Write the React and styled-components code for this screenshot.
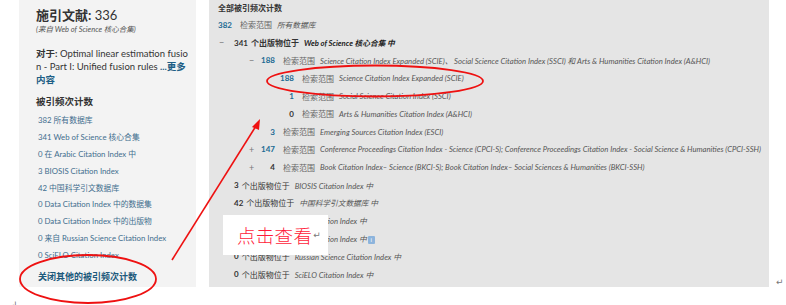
import React from 'react';
import styled, { createGlobalStyle } from 'styled-components';

const GlobalStyle = createGlobalStyle`
  body {
    margin: 0;
    background: #fff;
    font-family: Lato, "Noto Sans CJK SC", sans-serif;
  }
`;

const Page = styled.div`
  position: relative;
  width: 786px;
  height: 305px;
  overflow: hidden;
`;

const Top = styled.div`
  display: flex;
  align-items: flex-end;
  padding-left: 19px;
`;

const Side = styled.div`
  width: 177px;
  height: 287px;
  box-sizing: border-box;
  padding: 7px 0 0 17px;
  background: #f3f3f3;
  margin-right: 13px;
`;

const Title = styled.div`
  font-size: 13px;
  line-height: 17px;
  color: #333;
  b { font-weight: 700; }
`;

const Source = styled.div`
  font-size: 7.5px;
  font-style: italic;
  color: #555;
  line-height: 10px;
  margin-top: 1px;
`;

const About = styled.div`
  margin-top: 12px;
  width: 152px;
  font-size: 9.5px;
  line-height: 13px;
  color: #333;
  word-break: break-all;
  b { font-weight: 700; }
`;

const More = styled.span`
  color: #1d5e85;
  font-weight: 700;
`;

const SideHead = styled.div`
  margin-top: 10px;
  font-size: 9.5px;
  font-weight: 700;
  color: #333;
  line-height: 12px;
`;

const SideList = styled.div`
  margin-top: 4px;
  padding-left: 2px;
  display: flex;
  flex-direction: column;
`;

const SideLink = styled.div`
  height: 16.9px;
  line-height: 16.9px;
  font-size: 7.8px;
  color: #3f6e8e;
  white-space: nowrap;
`;

const CloseLink = styled.div`
  margin-top: 6px;
  padding-left: 2px;
  font-size: 9px;
  font-weight: 700;
  color: #1d5a7c;
`;

const Main = styled.div`
  width: 560px;
  height: 287px;
  box-sizing: border-box;
  padding: 1px 0 0 9px;
  background: #e5e5e5;
`;

const MainHead = styled.div`
  height: 15px;
  line-height: 15px;
  font-size: 8px;
  font-weight: 700;
  color: #333;
`;

const Row = styled.div`
  display: flex;
  align-items: center;
  height: 17.8px;
  padding-left: ${p => p.indent || 0}px;
  font-size: 8px;
  white-space: nowrap;
  color: #333;
`;

const Toggle = styled.span`
  width: ${p => p.w}px;
  flex: none;
  color: #777;
  font-size: 9px;
  padding-left: 1px;
  box-sizing: border-box;
`;

const Num = styled.span`
  width: ${p => (p.w ? p.w + 'px' : 'auto')};
  flex: none;
  text-align: right;
  font-weight: 700;
  color: ${p => (p.link ? '#1c6a93' : '#333')};
`;

const Label = styled.span`
  margin-left: 8px;
  color: #666;
`;

const Scope = styled.span`
  margin-left: 5px;
  font-style: italic;
  color: #555;
  font-size: 7.7px;
`;

const Pub = styled.span`
  margin-left: 3px;
  color: #333;
  font-weight: ${p => (p.bold ? 700 : 400)};
`;

const PubScope = styled.span`
  margin-left: 5px;
  font-style: italic;
  font-size: 7.7px;
  color: ${p => (p.bold ? '#222' : '#555')};
  font-weight: ${p => (p.bold ? 700 : 400)};
`;

const Info = styled.span`
  display: inline-block;
  width: 7px;
  height: 8px;
  margin-left: 1px;
  background: #8db4dc;
  color: #fff;
  font-size: 6px;
  line-height: 8px;
  text-align: center;
  font-style: normal;
  border-radius: 1px;
`;

const Mark = styled.span`
  color: #777;
  font-size: 9px;
  line-height: 9px;
  margin-left: ${p => p.ml || 0}px;
  font-family: "DejaVu Sans", sans-serif;
`;

const Bottom = styled.div`
  padding: 5px 0 0 10px;
  height: 11px;
`;

const Annot = styled.svg`
  position: absolute;
  left: 0;
  top: 0;
  pointer-events: none;
`;

const Callout = styled.div`
  position: absolute;
  left: 223px;
  top: 215px;
  width: 105px;
  height: 40px;
  background: #fff;
  display: flex;
  align-items: center;
  padding-left: 14px;
  box-sizing: border-box;
`;

const CalloutText = styled.span`
  font-family: "Noto Sans CJK SC", serif;
  font-weight: 300;
  font-size: 18.5px;
  color: #ff1a3a;
  letter-spacing: 0.3px;
`;

const sideItems = [
  '382 所有数据库',
  '341 Web of Science 核心合集',
  '0 在 Arabic Citation Index 中',
  '3 BIOSIS Citation Index',
  '42 中国科学引文数据库',
  '0 Data Citation Index 中的数据集',
  '0 Data Citation Index 中的出版物',
  '0 来自 Russian Science Citation Index',
  '0 SciELO Citation Index',
];

const pubRows = [
  { n: '3', s: 'BIOSIS Citation Index 中' },
  { n: '42', s: '中国科学引文数据库 中' },
  { n: '0', s: 'Data Citation Index 中' },
  { n: '0', s: 'Data Citation Index 中', info: true },
  { n: '0', s: 'Russian Science Citation Index 中' },
  { n: '0', s: 'SciELO Citation Index 中' },
];

export default function App() {
  return (
    <>
      <GlobalStyle />
      <Page>
        <Top>
          <Side>
            <Title><b>施引文献:</b> 336</Title>
            <Source>(来自 Web of Science 核心合集)</Source>
            <About>
              <b>对于:</b> Optimal linear estimation fusion - Part I: Unified fusion rules <More>...更多内容</More>
            </About>
            <SideHead>被引频次计数</SideHead>
            <SideList>
              {sideItems.map((t, i) => <SideLink key={i}>{t}</SideLink>)}
            </SideList>
            <CloseLink>关闭其他的被引频次计数</CloseLink>
          </Side>

          <Main>
            <MainHead>全部被引频次计数</MainHead>
            <Row>
              <Num link>382</Num>
              <Label>检索范围</Label>
              <Scope>所有数据库</Scope>
            </Row>
            <Row>
              <Toggle w={16}>−</Toggle>
              <Num>341</Num>
              <Pub bold>个出版物位于</Pub>
              <PubScope bold>Web of Science 核心合集 中</PubScope>
            </Row>
            <Row indent={30}>
              <Toggle w={10}>−</Toggle>
              <Num link w={17}>188</Num>
              <Label>检索范围</Label>
              <Scope>Science Citation Index Expanded (SCIE)、 Social Science Citation Index (SSCI) 和 Arts &amp; Humanities Citation Index (A&amp;HCI)</Scope>
            </Row>
            <Row indent={58}>
              <Num link w={18}>188</Num>
              <Label>检索范围</Label>
              <Scope>Science Citation Index Expanded (SCIE)</Scope>
            </Row>
            <Row indent={58}>
              <Num link w={18}>1</Num>
              <Label>检索范围</Label>
              <Scope>Social Science Citation Index (SSCI)</Scope>
            </Row>
            <Row indent={58}>
              <Num w={18}>0</Num>
              <Label>检索范围</Label>
              <Scope>Arts &amp; Humanities Citation Index (A&amp;HCI)</Scope>
            </Row>
            <Row indent={30}>
              <Toggle w={10} />
              <Num link w={17}>3</Num>
              <Label>检索范围</Label>
              <Scope>Emerging Sources Citation Index (ESCI)</Scope>
            </Row>
            <Row indent={30}>
              <Toggle w={10}>+</Toggle>
              <Num link w={17}>147</Num>
              <Label>检索范围</Label>
              <Scope>Conference Proceedings Citation Index - Science (CPCI-S);  Conference Proceedings Citation Index - Social Science &amp; Humanities (CPCI-SSH)</Scope>
            </Row>
            <Row indent={30}>
              <Toggle w={10}>+</Toggle>
              <Num w={17}>4</Num>
              <Label>检索范围</Label>
              <Scope>Book Citation Index– Science (BKCI-S);  Book Citation Index– Social Sciences &amp; Humanities (BKCI-SSH)</Scope>
            </Row>
            {pubRows.map((r, i) => (
              <Row key={i}>
                <Toggle w={16} />
                <Num>{r.n}</Num>
                <Pub>个出版物位于</Pub>
                <PubScope>{r.s}{r.info && <Info>i</Info>}</PubScope>
              </Row>
            ))}
          </Main>
          <Mark ml={7}>↵</Mark>
        </Top>
        <Bottom>
          <Mark>↲</Mark>
        </Bottom>

        <Callout>
          <CalloutText>点击查看</CalloutText>
          <Mark ml={1}>↵</Mark>
        </Callout>

        <Annot width="786" height="305" viewBox="0 0 786 305">
          <ellipse cx="88" cy="279" rx="68" ry="24" fill="none" stroke="#ee1111" strokeWidth="1.8" />
          <ellipse cx="375" cy="81" rx="108" ry="15.5" fill="none" stroke="#ee1111" strokeWidth="1.8" />
          <line x1="172" y1="260" x2="256" y2="126" stroke="#ee1111" strokeWidth="1.6" />
          <polygon points="260,119 252,127 259,130" fill="#ee1111" />
        </Annot>
      </Page>
    </>
  );
}
